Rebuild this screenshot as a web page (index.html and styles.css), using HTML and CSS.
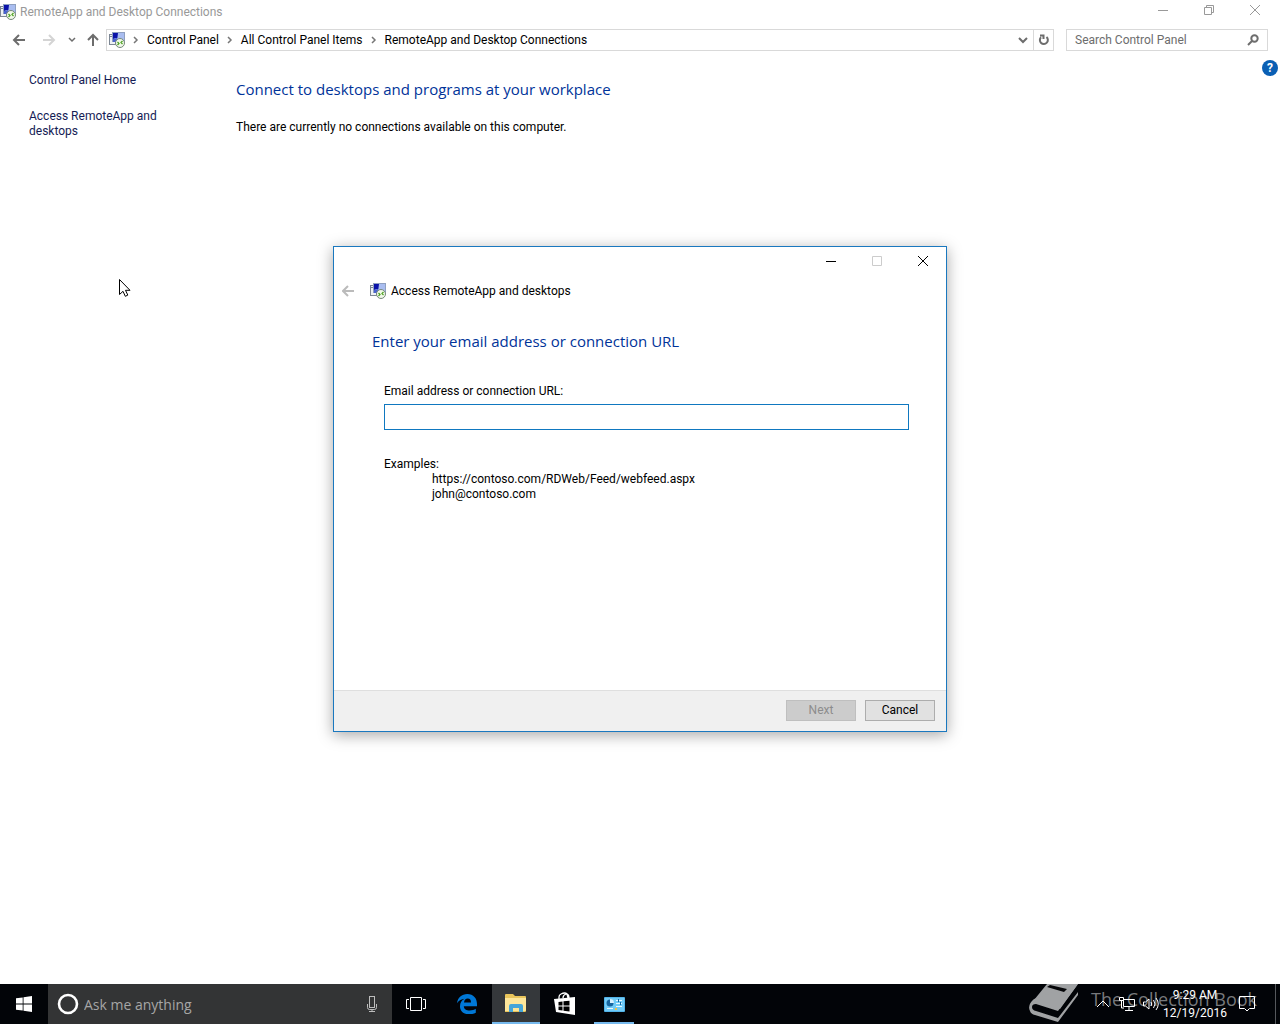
FILE: index.html
```
<!DOCTYPE html>
<html lang="en">
<head>
  <meta charset="UTF-8">
  <meta name="viewport" content="width=device-width, initial-scale=1.0">
  <title>RemoteApp and Desktop Connections</title>
  <link rel="stylesheet" href="styles.css">
</head>
<body>
  <!-- shared icon -->
  <svg class="defs" aria-hidden="true">
    <symbol id="remoteapp" viewBox="0 0 16 16">
      <rect x="0.5" y="2.5" width="6" height="10" fill="#eef1f5" stroke="#7d8794"/>
      <path d="M1 4.5h5" stroke="#7d8794"/>
      <rect x="3.5" y="0.5" width="12" height="9" fill="#b4c6ef" stroke="#8fa0c0"/>
      <path d="M4 1h5v5.500l-2-.5-3 1z" fill="#0a12a8"/>
      <path d="M9 1h6v8H8z" fill="#a9bdf0"/>
      <path d="M4 7l4-1v4H4z" fill="#4a63cf"/>
      <circle cx="11" cy="11" r="4.500" fill="#f1f8ea" stroke="#75877a"/>
      <path d="M8.500 10l1.500 1.500-1.500 1.500M13.500 9l-1.500 1.500 1.500 1.500" fill="none" stroke="#48a01c" stroke-width="1.200"/>
    </symbol>
  </svg>

  <div class="window">
    <header class="titlebar">
      <svg class="app-icon"><use href="#remoteapp"/></svg>
      <h1>RemoteApp and Desktop Connections</h1>
      <div class="controls">
        <button aria-label="Minimize"><svg width="12" height="12"><path d="M1 6.500h10"/></svg></button>
        <button aria-label="Restore"><svg width="12" height="12"><path d="M1.500 3.500h7v7h-7zM3.500 3V1.500h7v7H9"/></svg></button>
        <button aria-label="Close"><svg width="12" height="12"><path d="M1 1l10 10M11 1L1 11"/></svg></button>
      </div>
    </header>

    <div class="navbar">
      <div class="nav-buttons">
        <button aria-label="Back"><svg width="14" height="12"><path d="M13 6H2M7 1L2 6l5 5"/></svg></button>
        <button class="off" aria-label="Forward" disabled><svg width="14" height="12"><path d="M1 6h11M7 1l5 5-5 5"/></svg></button>
        <button class="recent" aria-label="Recent locations"><svg width="8" height="12"><path d="M1 4l3 3 3-3"/></svg></button>
        <button class="up" aria-label="Up"><svg width="12" height="14"><path d="M6 13V2M1 7l5-5 5 5"/></svg></button>
      </div>
      <nav class="address">
        <svg class="app-icon"><use href="#remoteapp"/></svg>
        <svg class="sep" width="6" height="8"><path d="M1 1l3 3-3 3"/></svg>
        <a href="#">Control Panel</a>
        <svg class="sep" width="6" height="8"><path d="M1 1l3 3-3 3"/></svg>
        <a href="#">All Control Panel Items</a>
        <svg class="sep" width="6" height="8"><path d="M1 1l3 3-3 3"/></svg>
        <a href="#">RemoteApp and Desktop Connections</a>
        <div class="address-end">
          <button aria-label="Previous locations"><svg width="10" height="12"><path d="M1 4l4 4 4-4"/></svg></button>
          <button class="refresh" aria-label="Refresh"><svg width="12" height="12"><path d="M3 3.200A4 4 0 1 0 8.500 3M2 1.500h3.500V5"/></svg></button>
        </div>
      </nav>
      <label class="search">
        <input type="text" placeholder="Search Control Panel" aria-label="Search Control Panel">
        <svg width="12" height="12"><circle cx="7.500" cy="4.500" r="3.200"/><path d="M5 7l-4 4"/></svg>
      </label>
    </div>

    <div class="content">
      <aside class="sidebar">
        <a href="#">Control Panel Home</a>
        <a href="#">Access RemoteApp and desktops</a>
      </aside>
      <main>
        <h2>Connect to desktops and programs at your workplace</h2>
        <p>There are currently no connections available on this computer.</p>
      </main>
      <button class="help" aria-label="Help">?</button>
    </div>

    <form class="dialog" role="dialog" aria-labelledby="dialog-title">
      <div class="controls">
        <button type="button" aria-label="Minimize"><svg width="12" height="12"><path d="M1 6.500h10"/></svg></button>
        <button type="button" class="off" aria-label="Maximize" disabled><svg width="12" height="12"><path d="M1.500 1.500h9v9h-9z"/></svg></button>
        <button type="button" aria-label="Close"><svg width="12" height="12"><path d="M1 1l10 10M11 1L1 11"/></svg></button>
      </div>
      <div class="dialog-head">
        <button type="button" aria-label="Back" disabled><svg width="13" height="12"><path d="M12 6H2M6 1L1 6l5 5"/></svg></button>
        <svg class="app-icon"><use href="#remoteapp"/></svg>
        <span id="dialog-title">Access RemoteApp and desktops</span>
      </div>
      <div class="dialog-body">
        <h2>Enter your email address or connection URL</h2>
        <div class="fields">
          <label for="url">Email address or connection URL:</label>
          <input type="text" id="url">
          <p>Examples:</p>
          <p class="example">https://contoso.com/RDWeb/Feed/webfeed.aspx</p>
          <p class="example">john@contoso.com</p>
        </div>
      </div>
      <div class="dialog-footer">
        <button type="button" disabled>Next</button>
        <button type="button">Cancel</button>
      </div>
    </form>
  </div>

  <footer class="taskbar">
    <button class="task" aria-label="Start">
      <svg width="16" height="16" fill="#fff"><path d="M0 2.300L6.700 1.400v6.200H0zM7.500 1.300L16 0v7.600H7.500zM0 8.400h6.700v6.200L0 13.700zM7.500 8.400H16V16l-8.500-1.300z"/></svg>
    </button>
    <label class="cortana">
      <svg width="22" height="22"><circle cx="11" cy="11" r="9" fill="none" stroke="#fff" stroke-width="2.600"/></svg>
      <input type="text" placeholder="Ask me anything" aria-label="Ask me anything">
      <svg width="12" height="18" fill="none" stroke="#bdbdbd"><rect x="3.500" y="1.500" width="5" height="11"/><path d="M1.500 9v3.500q0 2 2 2h5q2 0 2-2V9M6 14.500V17M3 16.500h6"/></svg>
    </label>
    <button class="task" aria-label="Task View">
      <svg width="20" height="14" fill="none" stroke="#fff"><path d="M4.500.5h11v13h-11zM3 2.500H.5v9H3M17 2.500h2.500v9H17"/></svg>
    </button>
    <div class="apps">
      <button class="task" aria-label="Microsoft Edge">
        <svg width="20" height="20" fill="#0078d7"><path d="M0 9.200C.8 3.500 4.800 0 10.300 0 16.500 0 20 4.400 20 10v2.200H6.800c.2 3 2.700 4.300 5.800 4.300 2.500 0 4.600-.7 6.200-1.700v4c-1.800 1-4.200 1.500-6.800 1.500C6.500 20.300 3 17 3 12.200 3 9 4.700 6.200 7.500 4.800 4.500 5 2 6.500 0 9.200zM7 8.500h7c0-2.500-1-3.900-3.300-3.900C8.700 4.600 7.300 6.200 7 8.500z"/></svg>
      </button>
      <button class="task active" aria-label="File Explorer">
        <svg width="22" height="18"><path d="M0 1q0-1 1-1h7l2 2h10q1 0 1 1v14q0 1-1 1H0z" fill="#e9c55b"/><path d="M0 4h21v12q0 1-1 1H0z" fill="#fde69a"/><path d="M4 18v-6q0-2 2-2h10q2 0 2 2v6h-4v-4H8v4z" fill="#45a5d8"/></svg>
      </button>
      <button class="task" aria-label="Store">
        <svg width="22" height="24"><path d="M5 7V5q0-2 2-3 4-2 6 0l1 4M9 6q0-3 3-4 3 0 3 4" fill="none" stroke="#fff" stroke-width="1.300"/><path d="M0 7l21-2v18L2 20z" fill="#fff"/><path d="M4.500 10l4-.5v4h-4zM9.500 9.300l6-.6v4.800h-6zM4.500 14.500h4v4l-4-.5zM9.500 14.500h6v5l-6-.8z" fill="#000"/></svg>
      </button>
      <button class="task running" aria-label="Control Panel">
        <svg width="21" height="15"><rect width="21" height="15" rx="1" fill="#52b4ea"/><rect x="1" y="1" width="19" height="13" fill="#71cbf7"/><circle cx="6" cy="6" r="3.500" fill="#16659f"/><path d="M6 6V2a4 4 0 0 1 4 4z" fill="#d8f1ff"/><path d="M12 3.500h6M12 6.500h6M12 9.500h6M3 11.500h6" stroke="#e8f8ff"/><path d="M14.500 2v3M16.500 5v3" stroke="#16659f"/><path d="M11 11h2v2h-2z" fill="#f4c242"/></svg>
      </button>
    </div>
    <div class="tray">
      <button aria-label="Show hidden icons"><svg width="14" height="8"><path d="M1 7l6-6 6 6"/></svg></button>
      <button aria-label="Network"><svg width="16" height="14"><path d="M4.500 2.500h11v7h-11zM10 10v3M6 13.500h8M2.500 4v7H5"/><path d="M.5.500h4v3h-4z" fill="#000"/></svg></button>
      <button aria-label="Volume"><svg width="18" height="14"><path d="M1.500 5h2L7 2v10L3.500 9h-2zM9 5q1.500 2 0 4M11.500 3q3 4 0 8M14 1q4.500 6 0 12"/></svg></button>
      <div class="clock"><span>9:29 AM</span><span>12/19/2016</span></div>
      <button class="notify" aria-label="Action center"><svg width="18" height="16"><path d="M1.500.500h15v12h-5L9 15l-2.500-2.500h-5z"/></svg></button>
      <button class="show-desktop" aria-label="Show desktop"></button>
    </div>
    <div class="watermark">
      <svg width="52" height="40"><path d="M18 0h31L31 25 5 16z" fill="#a0a2a4"/><path d="M5 15Q-2 21 1 27q1 3 5 4l23 7 20-27V8L29 34 7 27q-4-1-4-4 0-3 4-3l22 7L49 0z" fill="#a0a2a4"/><path d="M21 1l17 4-3 3-17-5z" fill="#050609"/></svg>
      <span>The Collection Book</span>
    </div>
  </footer>

  <svg class="cursor" width="14" height="20"><path d="M1.500 1.500v15l3.500-3.200 2.300 5 2.500-1.200-2.300-4.800h4.500z" fill="#fff" stroke="#000"/></svg>
</body>
</html>
```
FILE: styles.css
```
* {
  box-sizing: border-box;
}
body {
  display: flex;
  flex-direction: column;
  height: 100vh;
  margin: 0;
  overflow: hidden;
  background: #fff;
  color: #000;
  font-family: Roboto, "Open Sans", sans-serif;
  font-size: 12px;
  line-height: 15px;
}
h1, h2, p {
  margin: 0;
  font-weight: normal;
}
h1 {
  font-size: 12px;
}
h2 {
  color: #003399;
  font-family: "Open Sans", "Noto Sans", sans-serif;
  font-size: 15px;
  line-height: 20px;
}
a {
  color: inherit;
  text-decoration: none;
}
button, input {
  border: 0;
  padding: 0;
  background: none;
  color: inherit;
  font: inherit;
}
button {
  display: flex;
  align-items: center;
  justify-content: center;
}
svg {
  flex: none;
}
.defs {
  position: absolute;
  width: 0;
  height: 0;
}
.app-icon {
  width: 16px;
  height: 16px;
}

/* main window */
.window {
  display: flex;
  flex: 1;
  flex-direction: column;
  min-height: 0;
}
.titlebar {
  display: flex;
  align-items: center;
  gap: 4px;
  height: 24px;
  color: #999;
}
.controls {
  display: flex;
  margin-left: auto;
}
.controls button {
  width: 46px;
  height: 20px;
}
.controls svg {
  fill: none;
  stroke: currentColor;
}
.titlebar .controls {
  align-self: flex-start;
  margin-right: 2px;
}
.navbar {
  display: flex;
  align-items: center;
  height: 32px;
  padding-right: 12px;
}
.nav-buttons {
  display: flex;
  align-items: center;
  padding-left: 12px;
  color: #6d6d6d;
}
.nav-buttons svg {
  fill: none;
  stroke: currentColor;
  stroke-width: 2;
}
.nav-buttons button {
  width: 30px;
}
.nav-buttons button:first-child {
  width: 14px;
  margin-right: 8px;
}
.nav-buttons .off {
  color: #d4d4d4;
}
.nav-buttons .recent {
  width: 16px;
}
.nav-buttons .up {
  width: 26px;
}
.nav-buttons .recent svg {
  stroke-width: 1.5;
}
.address {
  display: flex;
  flex: 1;
  align-items: center;
  gap: 8px;
  height: 22px;
  border: 1px solid #d9d9d9;
  padding-left: 2px;
}
.sep {
  fill: none;
  stroke: #777;
  stroke-width: 1.5;
}
.address-end {
  display: flex;
  align-self: stretch;
  margin-left: auto;
}
.address-end button {
  width: 20px;
}
.address-end .refresh {
  border-left: 1px solid #d9d9d9;
}
.address-end svg, .search svg {
  fill: none;
  stroke: #6d6d6d;
  stroke-width: 2;
}
.search {
  display: flex;
  align-items: center;
  width: 202px;
  height: 22px;
  margin-left: 12px;
  border: 1px solid #d9d9d9;
  padding: 0 8px;
}
.search input, .cortana input {
  flex: 1;
  min-width: 0;
  outline: 0;
}
.search input::placeholder {
  color: #6d6d6d;
  opacity: 1;
}
.content {
  display: flex;
  flex: 1;
}
.sidebar {
  display: flex;
  flex-direction: column;
  gap: 21px;
  width: 236px;
  padding: 17px 76px 0 29px;
  color: #151c55;
}
main {
  flex: 1;
  padding-top: 23px;
}
main p {
  margin-top: 21px;
}
.help {
  width: 16px;
  height: 16px;
  margin: 4px 2px;
  border-radius: 50%;
  background: #0a5fb4;
  color: #fff;
  font-weight: bold;
}

/* wizard */
.dialog {
  position: absolute;
  top: 246px;
  left: 0;
  right: 0;
  display: flex;
  flex-direction: column;
  width: 614px;
  min-height: 486px;
  margin: 0 auto;
  border: 1px solid #1a78bf;
  background: #fff;
  box-shadow: 0 3px 14px rgba(0, 0, 0, 0.35);
}
.dialog .controls button {
  height: 28px;
}
.dialog .off {
  color: #ccc;
}
.dialog-head {
  display: flex;
  align-items: center;
  height: 32px;
  padding-left: 8px;
}
.dialog-head button {
  margin-right: 15px;
  color: #bbb;
}
.dialog-head button svg {
  fill: none;
  stroke: currentColor;
  stroke-width: 2;
}
.dialog-head span {
  margin-left: 5px;
}
.dialog-body {
  flex: 1;
  padding: 24px 37px 24px 38px;
}
.fields {
  display: flex;
  flex-direction: column;
  padding: 33px 0 0 12px;
}
.fields input {
  height: 26px;
  margin: 5px 0 27px;
  border: 1px solid #0f78c0;
  padding: 0 4px;
  outline: 0;
}
.example {
  padding-left: 48px;
}
.dialog-footer {
  display: flex;
  justify-content: flex-end;
  gap: 9px;
  height: 41px;
  border-top: 1px solid #dfdfdf;
  padding: 9px 11px;
  background: #f0f0f0;
}
.dialog-footer button {
  width: 70px;
  height: 21px;
  border: 1px solid #adadad;
  background: #e1e1e1;
}
.dialog-footer button:disabled {
  border-color: #bfbfbf;
  background: #ccc;
  color: #8c8c8c;
}

/* taskbar */
.taskbar {
  position: relative;
  display: flex;
  height: 40px;
  background: #020408;
  color: #fff;
}
.task {
  width: 48px;
  height: 40px;
}
.cortana {
  display: flex;
  align-items: center;
  gap: 5px;
  width: 344px;
  padding: 0 14px 0 9px;
  background: #333435;
  font-family: "Open Sans", "Noto Sans", sans-serif;
  font-size: 14px;
  line-height: 20px;
}
.cortana input {
  height: 24px;
}
.cortana input::placeholder {
  color: #a6a6a6;
  opacity: 1;
}
.apps {
  display: flex;
  gap: 1px;
  margin-left: 3px;
}
.active {
  border-bottom: 2px solid #76b9ed;
  background: #35383b;
}
.running {
  background: linear-gradient(#76b9ed, #76b9ed) center bottom / 40px 2px no-repeat;
}
.tray {
  z-index: 1;
  display: flex;
  align-items: center;
  margin-left: auto;
}
.tray button {
  width: 24px;
  height: 40px;
}
.tray svg {
  fill: none;
  stroke: #fff;
}
.clock {
  display: flex;
  flex-direction: column;
  align-items: center;
  width: 64px;
  line-height: 18px;
}
.tray .notify {
  width: 40px;
}
.tray .show-desktop {
  width: 5px;
  margin-left: 8px;
  border-left: 1px solid #55585c;
}
.watermark {
  position: absolute;
  top: 0;
  right: 23px;
  display: flex;
  gap: 10px;
  color: #77797c;
  font-family: "Open Sans", "Noto Sans", sans-serif;
  font-size: 18px;
  line-height: 30px;
}
.cursor {
  position: absolute;
  top: 278px;
  left: 118px;
}
```
